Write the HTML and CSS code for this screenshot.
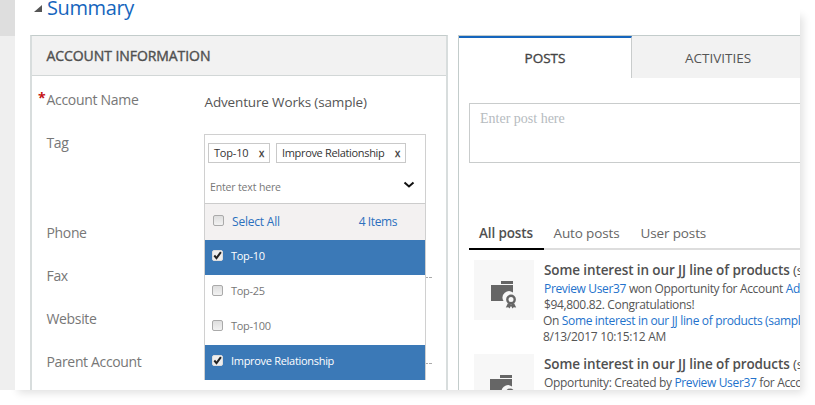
FILE: index.html
```
<!DOCTYPE html>
<html lang="en">
<head>
<meta charset="utf-8">
<title>Account summary</title>
<link rel="stylesheet" href="styles.css">
</head>
<body>
<svg width="0" height="0" class="defs" aria-hidden="true">
  <symbol id="won" viewBox="0 0 60 60">
    <path fill="#666" d="M27 21h12v3H27zM17 25h22v7.500a6.500 6.500 0 0 0-9.500 8.500H17z"/>
    <circle cx="37" cy="39.500" r="3.700" fill="none" stroke="#666" stroke-width="2.400"/>
    <path fill="#666" d="M34 43l3 1.500 3-1.500 2.200 4.500-2.500-.3-1.200 1.300L37 46l-1.500 2.500-1.200-1.300-2.500.3z"/>
  </symbol>
</svg>
<div class="window">
  <aside class="rail"></aside>
  <main class="content">
    <h1 class="summary"><svg class="tri" width="8" height="7"><path d="M8 0v7H0z" fill="#555"/></svg><span>Summary</span></h1>
    <div class="columns">
      <section class="account">
        <h2 class="account-title"><span>ACCOUNT INFORMATION</span></h2>
        <div class="fields">
          <div class="row"><label class="label required">Account Name</label><span class="value">Adventure Works (sample)</span></div>
          <div class="row tag-row"><label class="label">Tag</label>
            <div class="picker">
              <div class="chips">
                <span class="chip"><span>Top-10</span><b>x</b></span>
                <span class="chip"><span>Improve Relationship</span><b>x</b></span>
              </div>
              <div class="entry"><span>Enter text here</span><svg width="12" height="8"><path d="M1.500 1.500L6 5.500l4.500-4" fill="none" stroke="#111" stroke-width="2"/></svg></div>
              <div class="options">
                <div class="option all"><i class="box"></i><span>Select All</span><span class="count">4 Items</span></div>
                <div class="option on"><i class="box"><svg viewBox="0 0 11 11"><path d="M2.300 5.500l2.200 2.600 4.400-6"/></svg></i><span>Top-10</span></div>
                <div class="option"><i class="box"></i><span>Top-25</span></div>
                <div class="option"><i class="box"></i><span>Top-100</span></div>
                <div class="option on"><i class="box"><svg viewBox="0 0 11 11"><path d="M2.300 5.500l2.200 2.600 4.400-6"/></svg></i><span>Improve Relationship</span></div>
              </div>
            </div>
          </div>
          <div class="row"><label class="label">Phone</label></div>
          <div class="row"><label class="label">Fax</label><span class="dashes"></span></div>
          <div class="row"><label class="label">Website</label></div>
          <div class="row"><label class="label">Parent Account</label><span class="dashes"></span></div>
        </div>
      </section>
      <section class="social">
        <nav class="tabs"><span class="tab active">POSTS</span><span class="tab">ACTIVITIES</span></nav>
        <div class="compose">Enter post here</div>
        <nav class="filters"><span class="filter active">All posts</span><span class="filter auto">Auto posts</span><span class="filter">User posts</span></nav>
        <article class="post">
          <svg class="thumb" width="60" height="60"><use href="#won"/></svg>
          <div class="text">
            <h3>Some interest in our JJ line of products <span>(sample)</span></h3>
            <p><a>Preview User37</a> won Opportunity for Account <a>Adventure</a></p>
            <p>$94,800.82. Congratulations!</p>
            <p class="back">On <a>Some interest in our JJ line of products (sample)</a></p>
            <p class="back date">8/13/2017 10:15:12 AM</p>
          </div>
        </article>
        <article class="post">
          <svg class="thumb" width="60" height="60"><use href="#won" x="-1"/></svg>
          <div class="text">
            <h3>Some interest in our JJ line of products <span>(sample)</span></h3>
            <p>Opportunity: Created by <a>Preview User37</a> for Account</p>
          </div>
        </article>
      </section>
    </div>
  </main>
</div>
</body>
</html>
```
FILE: styles.css
```
* { box-sizing: border-box; }
body { margin: 0; width: 815px; height: 405px; overflow: hidden; background: #fff; font-family: "Open Sans", "Noto Sans", sans-serif; color: #555; }
.defs { display: block; }
h1, h2, h3, p { margin: 0; font-weight: 400; }
.window { position: relative; width: 800px; height: 390px; display: flex; overflow: hidden; background: #fff; }
body::before { content: ""; position: absolute; left: 15px; top: 13px; width: 785px; height: 377px; box-shadow: 3px 3px 8px rgba(0,0,0,.12); }
.rail { width: 15px; flex: none; background: linear-gradient(#dedede 36px, #efefef 36px); }
.content { flex: 1; min-width: 0; padding-left: 15px; }
.summary { height: 35px; display: flex; align-items: flex-start; color: #1565bd; font-size: 20px; line-height: 28px; letter-spacing: -.4px; }
.summary span { margin-top: -6px; }
.tri { margin: 5px 5px 0 4px; }
.columns { display: flex; gap: 10px; width: 900px; height: 355px; }
.account { width: 418px; border: solid #d8dddd; border-width: 1px 2px 0; border-top-color: #c3cccb; }
.account-title { height: 40px; padding-left: 14.5px; background: #f2f2f2; border-bottom: 1px solid #d2d7d7; font-size: 14px; line-height: 40px; letter-spacing: -.07px; color: #505050; -webkit-text-stroke: .4px #505050; }
.fields { padding: 2px 0 0 14px; }
.row { height: 43px; display: flex; line-height: 43px; font-size: 14px; }
.tag-row { height: 90px; }
.label { width: 158px; flex: none; padding-left: .5px; color: #777; letter-spacing: -.35px; }
.required { position: relative; letter-spacing: -.3px; }
.required::before { content: "*"; position: absolute; left: -8px; top: -2px; color: #c61414; font-weight: 700; }
.value { padding-left: .5px; line-height: 48px; font-size: 13.5px; letter-spacing: -.15px; color: #555; }
.picker { position: relative; z-index: 1; width: 222px; height: 246px; margin-top: 13px; border: 1px solid #d0d0d0; background: #fff; line-height: normal; flex: none; }
.chips { display: flex; gap: 6px; padding: 8px 0 0 3px; }
.chip { height: 20px; border: 1px solid #c9c9c9; padding: 0 5px; font-size: 11px; letter-spacing: -.33px; line-height: 18px; color: #333; display: flex; justify-content: space-between; width: 62px; white-space: nowrap; }
.chip:first-child { letter-spacing: -.2px; }
.chip:last-child { width: 130px; }
.chip b { font-size: 10px; font-weight: 400; -webkit-text-stroke: .3px #333; }
.entry { height: 40px; display: flex; justify-content: space-between; align-items: center; padding: 7px 10px 0 5px; font-size: 10.5px; letter-spacing: -.15px; color: #777; }
.entry svg { margin-top: -3px; }
.options { border-top: 1px solid #ccc; }
.option { height: 35px; display: flex; align-items: center; padding: 0 0 3px 7px; font-size: 11px; letter-spacing: -.3px; color: #777; }
.option span { margin-top: -2px; }
.option.all { height: 36px; font-size: 12px; letter-spacing: -.2px; color: #2b70be; background: #f3f1f1; padding-left: 8px; }
.option.all span { margin-top: 1px; }
.option.on { color: #fff; background: #3b79b7; }
.box { width: 11px; height: 11px; flex: none; border: 1px solid #aaa; border-radius: 2px; background: linear-gradient(#dedede, #f2f2f2); margin: -1px 8px 0 0; }
.on .box { background: #eee; border-color: #ddd; }
.box svg { display: block; width: 11px; height: 11px; margin: -1px; fill: none; stroke: #222; stroke-width: 2; }
.option .count { margin-left: auto; margin-right: 28px; letter-spacing: -.4px; }
.dashes { width: 228px; height: 1px; margin-top: 23px; background: repeating-linear-gradient(90deg, #aaa 0 4px, transparent 4px 5px); }
.social { width: 400px; border: solid #c3cccb; border-width: 1px 0 0 1px; }
.tabs { display: flex; height: 42px; }
.tab { width: 173px; background: #f2f2f2; text-align: center; line-height: 45px; font-size: 13.5px; flex: none; }
.tab:last-child { width: 220px; padding-right: 48px; }
.tab.active { background: #fff; border-top: 2px solid #1565bd; border-right: 1px solid #c9cccc; line-height: 41px; color: #444; -webkit-text-stroke: .35px #444; }
.compose { margin: 25px 0 0 10px; height: 60px; border: 1px solid #c9cccc; padding: 6px 10px; font: 14px/18px "Liberation Serif", serif; color: #b6bbc0; }
.filters { display: flex; margin: 58px 0 0 10px; height: 29px; border-bottom: 2px solid #ddd; font-size: 13.5px; line-height: 24px; letter-spacing: -.13px; color: #666; }
.filter.active { width: 75px; height: 29px; padding-left: 10px; border-bottom: 2px solid #000; font-weight: 600; color: #505050; }
.filter.auto { margin-left: 9.5px; width: 87px; }
.post { display: flex; height: 84px; margin: 10px 0 0 15px; gap: 10px; }
.thumb { background: #f7f7f7; flex: none; }
.text { white-space: nowrap; font-size: 12px; line-height: 16px; letter-spacing: -.34px; }
h3 { font-size: 13.5px; font-weight: 600; line-height: 20px; height: 21px; letter-spacing: -.11px; color: #505050; }
h3 span { font-weight: 400; }
.text a { color: #2372cc; }
.back { margin-left: -1px; }
.date { letter-spacing: -.28px; }
```
